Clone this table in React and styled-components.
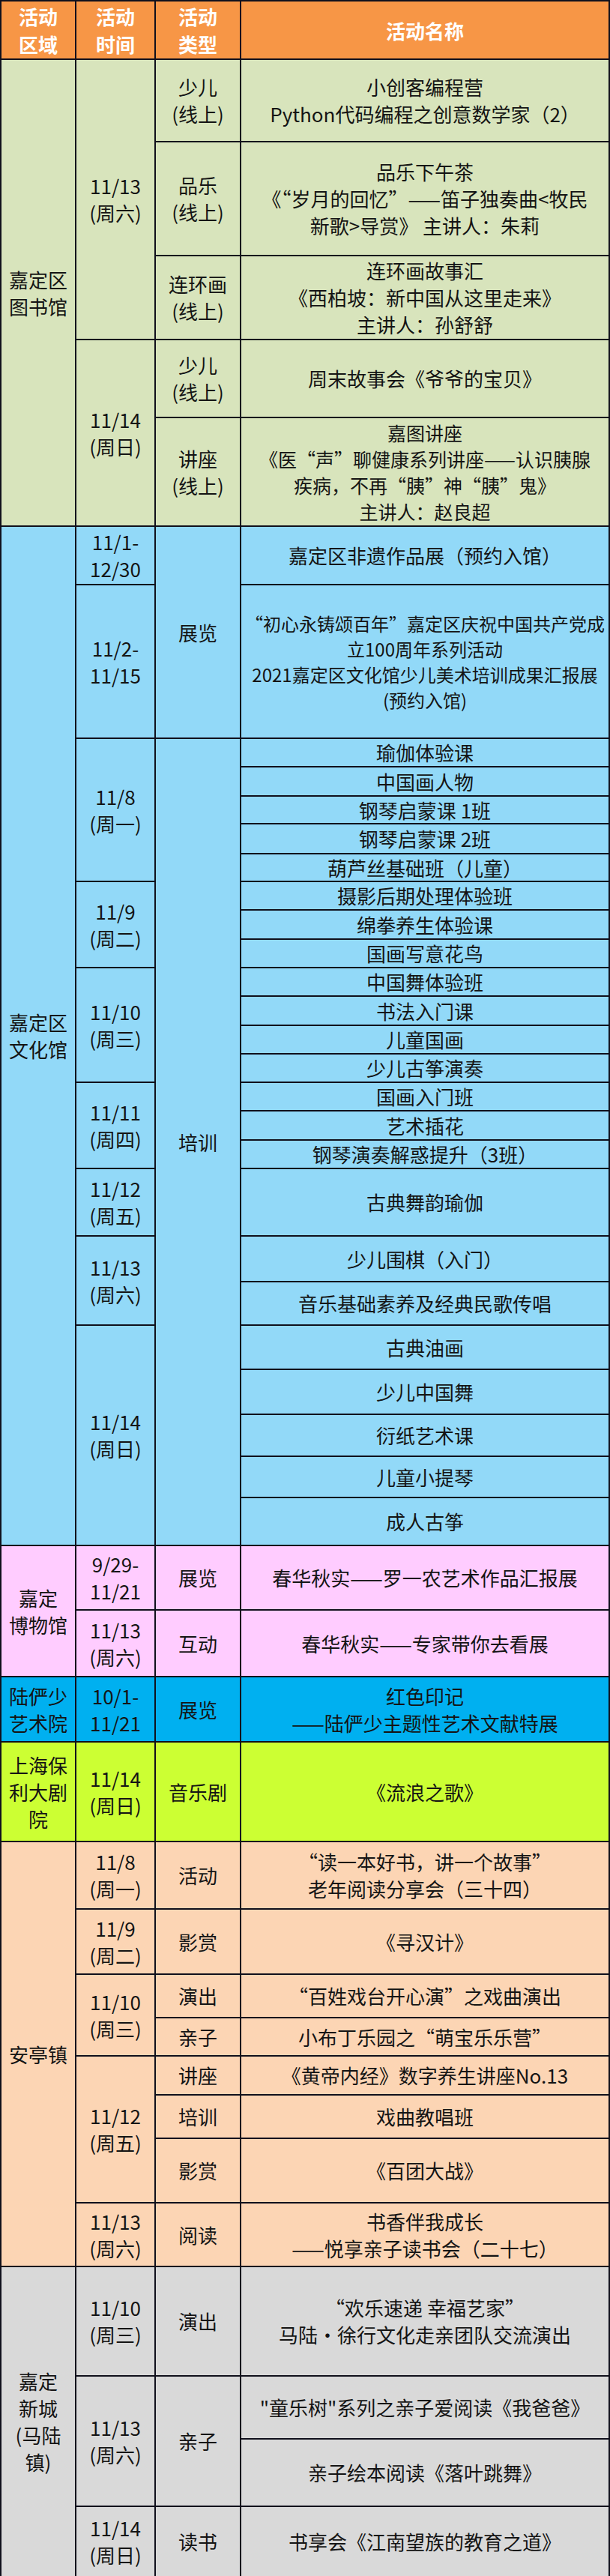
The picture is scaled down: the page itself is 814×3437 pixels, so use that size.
import React from 'react';
import styled, { createGlobalStyle } from 'styled-components';

const GlobalStyle = createGlobalStyle`
  html, body {
    margin: 0;
    padding: 0;
    background: #fff;
  }
  body {
    font-family: "Noto Sans CJK SC", "Microsoft YaHei", sans-serif;
  }
`;

const tones = {
  head: '#f79646',
  lib: '#d8e4bc',
  cul: '#92d9f8',
  mus: '#ffccff',
  lu: '#00b0f0',
  poly: '#ccff33',
  an: '#fcd5b4',
  xin: '#d9d9d9',
};

// y positions of every horizontal rule in the sheet (leaf rows)
const marks = [
  0, 78, 188, 340, 452, 556, 701, 779, 984, 1022, 1061, 1098, 1138, 1175,
  1213, 1252, 1290, 1328, 1367, 1405, 1443, 1481, 1520, 1558, 1648, 1709,
  1767, 1826, 1886, 1942, 1997, 2061, 2147, 2236, 2323, 2456, 2546, 2633,
  2691, 2742, 2794, 2852, 2938, 3023, 3169, 3253, 3343, 3437,
];

const rowTracks = marks
  .slice(1)
  .map((m, i) => `${m - marks[i] - 2}px`)
  .join(' ');

const Sheet = styled.div`
  display: grid;
  box-sizing: border-box;
  width: 814px;
  padding: 2px;
  gap: 2px;
  background: #10101c;
  grid-template-columns: 98px 104px 112px 1fr;
  grid-template-rows: ${(p) => p.$rows};
`;

const Cell = styled.div`
  grid-row: span ${(p) => p.$span || 1};
  background: ${(p) => tones[p.$tone]};
  display: flex;
  align-items: center;
  justify-content: center;
  text-align: center;
  white-space: pre;
  overflow: hidden;
  color: #141414;
  font-size: ${(p) => p.$fs || 26}px;
  line-height: ${(p) => (p.$fs ? p.$fs + 10 : 36)}px;
`;

const HeadCell = styled(Cell)`
  color: #fff;
  font-weight: 700;
  line-height: 37px;
`;

const header = ['活动\n区域', '活动\n时间', '活动\n类型', '活动名称'];

// [rowspan, text, fontSize?] in table order, grouped by venue
const sections = [
  {
    tone: 'lib',
    cells: [
      [5, '嘉定区\n图书馆'],
      [3, '11/13\n(周六)'],
      [1, '少儿\n(线上)'],
      [1, '小创客编程营\nPython代码编程之创意数学家（2）'],
      [1, '品乐\n(线上)'],
      [1, '品乐下午茶\n《“岁月的回忆”——笛子独奏曲<牧民\n新歌>导赏》 主讲人：朱莉'],
      [1, '连环画\n(线上)'],
      [1, '连环画故事汇\n《西柏坡：新中国从这里走来》\n主讲人：孙舒舒'],
      [2, '11/14\n(周日)'],
      [1, '少儿\n(线上)'],
      [1, '周末故事会《爷爷的宝贝》'],
      [1, '讲座\n(线上)'],
      [1, '嘉图讲座\n《医“声”聊健康系列讲座——认识胰腺\n疾病，不再“胰”神“胰”鬼》\n主讲人：赵良超', 25],
    ],
  },
  {
    tone: 'cul',
    cells: [
      [25, '嘉定区\n文化馆'],
      [1, '11/1-\n12/30'],
      [2, '展览'],
      [1, '嘉定区非遗作品展（预约入馆）'],
      [1, '11/2-\n11/15'],
      [1, '“初心永铸颂百年”嘉定区庆祝中国共产党成\n立100周年系列活动\n2021嘉定区文化馆少儿美术培训成果汇报展\n(预约入馆)', 24],
      [5, '11/8\n(周一)'],
      [23, '培训'],
      [1, '瑜伽体验课'],
      [1, '中国画人物'],
      [1, '钢琴启蒙课 1班'],
      [1, '钢琴启蒙课 2班'],
      [1, '葫芦丝基础班（儿童）'],
      [3, '11/9\n(周二)'],
      [1, '摄影后期处理体验班'],
      [1, '绵拳养生体验课'],
      [1, '国画写意花鸟'],
      [4, '11/10\n(周三)'],
      [1, '中国舞体验班'],
      [1, '书法入门课'],
      [1, '儿童国画'],
      [1, '少儿古筝演奏'],
      [3, '11/11\n(周四)'],
      [1, '国画入门班'],
      [1, '艺术插花'],
      [1, '钢琴演奏解惑提升（3班）'],
      [1, '11/12\n(周五)'],
      [1, '古典舞韵瑜伽'],
      [2, '11/13\n(周六)'],
      [1, '少儿围棋（入门）'],
      [1, '音乐基础素养及经典民歌传唱'],
      [5, '11/14\n(周日)'],
      [1, '古典油画'],
      [1, '少儿中国舞'],
      [1, '衍纸艺术课'],
      [1, '儿童小提琴'],
      [1, '成人古筝'],
    ],
  },
  {
    tone: 'mus',
    cells: [
      [2, '嘉定\n博物馆'],
      [1, '9/29-\n11/21'],
      [1, '展览'],
      [1, '春华秋实——罗一农艺术作品汇报展'],
      [1, '11/13\n(周六)'],
      [1, '互动'],
      [1, '春华秋实——专家带你去看展'],
    ],
  },
  {
    tone: 'lu',
    cells: [
      [1, '陆俨少\n艺术院'],
      [1, '10/1-\n11/21'],
      [1, '展览'],
      [1, '红色印记\n——陆俨少主题性艺术文献特展'],
    ],
  },
  {
    tone: 'poly',
    cells: [
      [1, '上海保\n利大剧\n院'],
      [1, '11/14\n(周日)'],
      [1, '音乐剧'],
      [1, '《流浪之歌》'],
    ],
  },
  {
    tone: 'an',
    cells: [
      [8, '安亭镇'],
      [1, '11/8\n(周一)'],
      [1, '活动'],
      [1, '“读一本好书，讲一个故事”\n老年阅读分享会（三十四）'],
      [1, '11/9\n(周二)'],
      [1, '影赏'],
      [1, '《寻汉计》'],
      [2, '11/10\n(周三)'],
      [1, '演出'],
      [1, '“百姓戏台开心演”之戏曲演出'],
      [1, '亲子'],
      [1, '小布丁乐园之“萌宝乐乐营”'],
      [3, '11/12\n(周五)'],
      [1, '讲座'],
      [1, '《黄帝内经》数字养生讲座No.13'],
      [1, '培训'],
      [1, '戏曲教唱班'],
      [1, '影赏'],
      [1, '《百团大战》'],
      [1, '11/13\n(周六)'],
      [1, '阅读'],
      [1, '书香伴我成长\n——悦享亲子读书会（二十七）'],
    ],
  },
  {
    tone: 'xin',
    cells: [
      [4, '嘉定\n新城\n(马陆\n镇)'],
      [1, '11/10\n(周三)'],
      [1, '演出'],
      [1, '“欢乐速递 幸福艺家”\n马陆•徐行文化走亲团队交流演出'],
      [2, '11/13\n(周六)'],
      [2, '亲子'],
      [1, '"童乐树"系列之亲子爱阅读《我爸爸》'],
      [1, '亲子绘本阅读《落叶跳舞》'],
      [1, '11/14\n(周日)'],
      [1, '读书'],
      [1, '书享会《江南望族的教育之道》'],
    ],
  },
];

export default function App() {
  return (
    <>
      <GlobalStyle />
      <Sheet $rows={rowTracks}>
        {header.map((h) => (
          <HeadCell key={h} $tone="head">
            {h}
          </HeadCell>
        ))}
        {sections.map((s) =>
          s.cells.map(([span, text, fs], i) => (
            <Cell key={s.tone + i} $tone={s.tone} $span={span} $fs={fs}>
              {text}
            </Cell>
          ))
        )}
      </Sheet>
    </>
  );
}
